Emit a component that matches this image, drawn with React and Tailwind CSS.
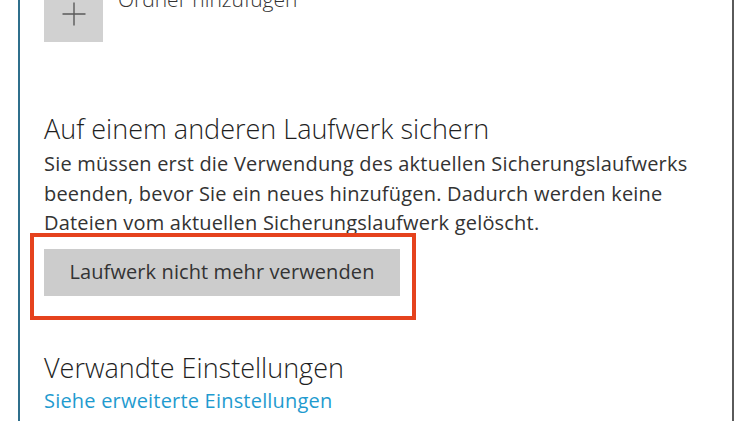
export default function App() {
  return (
    <div className="w-[750px] h-[421px] bg-white overflow-hidden flex" style={{ fontFamily: '"Open Sans", "Noto Sans", sans-serif' }}>
      <div className="w-[18px] shrink-0 bg-white" />
      <div className="w-[2px] shrink-0 bg-[#2f6f8c]" />
      <div className="flex-1 flex flex-col pl-[24px] bg-white">
        <div className="flex items-start h-[42px] shrink-0">
          <div className="w-[59px] h-[42px] bg-[#d1d1d1] relative shrink-0">
            <svg width="24" height="24" viewBox="0 0 24 24" className="absolute left-[18px] top-[2px]">
              <path d="M12 0.5 V23.5 M0.5 12 H23.5" stroke="#5a5a5a" strokeWidth="1.4" fill="none" />
            </svg>
          </div>
          <div className="ml-[15px] -mt-[15px] text-[21px] font-light text-[#333] leading-[28px] whitespace-nowrap">Ordner hinzufügen</div>
        </div>
        <div className="mt-[70px] text-[27px] font-light text-[#1f1f1f] leading-[34px] whitespace-nowrap">Auf einem anderen Laufwerk sichern</div>
        <div className="mt-[3px] text-[20px] text-[#333] leading-[29.5px] w-[680px] tracking-[0.2px]">
          Sie müssen erst die Verwendung des aktuellen Sicherungslaufwerks beenden, bevor Sie ein neues hinzufügen. Dadurch werden keine Dateien vom aktuellen Sicherungslaufwerk gelöscht.
        </div>
        <div className="-mt-[5px] -ml-[14px] w-[386px] h-[87px] shrink-0 border-4 border-[#e5421d] pl-[10px] pt-[12px]">
          <div className="w-[356px] h-[47px] bg-[#cccccc] flex items-center justify-center text-[20px] text-[#333] tracking-[0.1px] whitespace-nowrap">Laufwerk nicht mehr verwenden</div>
        </div>
        <div className="mt-[31px] text-[27px] font-light text-[#1f1f1f] leading-[34px] whitespace-nowrap">Verwandte Einstellungen</div>
        <div className="mt-[4px] text-[20px] text-[#1f9bcf] leading-[24px] tracking-[0.2px] whitespace-nowrap">Siehe erweiterte Einstellungen</div>
      </div>
      <div className="w-[2px] shrink-0 bg-[#5a5a5a]" />
      <div className="w-[16px] shrink-0 bg-white" />
    </div>
  );
}
